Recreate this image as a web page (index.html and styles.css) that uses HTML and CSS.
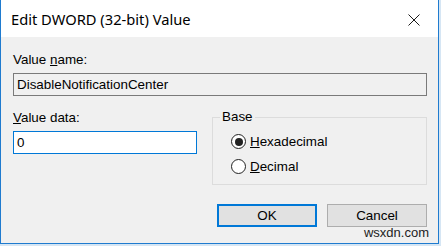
FILE: index.html
```html
<!DOCTYPE html>
<html lang="en">
<head>
    <meta charset="UTF-8">
    <title>Edit DWORD (32-bit) Value</title>
    <link rel="stylesheet" href="styles.css">
</head>
<body>
    <div class="window">
        <div class="titlebar">
            <span class="title">Edit DWORD (32-bit) Value</span>
            <svg class="close" width="12" height="12" viewBox="0 0 12 12">
                <path d="M0.5 0.5 L11.5 11.5 M11.5 0.5 L0.5 11.5" stroke="#1a1a1a" stroke-width="1" fill="none"/>
            </svg>
        </div>

        <div class="content">
            <div class="label">Value <u>n</u>ame:</div>
            <div class="textbox readonly">DisableNotificationCenter</div>

            <div class="lower">
                <div class="data-col">
                    <div class="label"><u>V</u>alue data:</div>
                    <div class="textbox focused">0</div>
                </div>
                <fieldset class="base">
                    <legend>Base</legend>
                    <div class="radio-row">
                        <span class="radio checked"></span>
                        <span><u>H</u>exadecimal</span>
                    </div>
                    <div class="radio-row">
                        <span class="radio"></span>
                        <span><u>D</u>ecimal</span>
                    </div>
                </fieldset>
            </div>

            <div class="buttons">
                <button class="btn default">OK</button>
                <button class="btn">Cancel</button>
            </div>
        </div>

        <div class="watermark">wsxdn.com</div>
    </div>
</body>
</html>
```

FILE: styles.css
```css
body {
    margin: 0;
    background-color: #d6e6f4;
    font-family: "Liberation Sans", Arial, sans-serif;
    font-size: 13.4px;
    color: #000;
}

.window {
    position: relative;
    width: 439px;
    height: 244px;
    box-sizing: border-box;
    background-color: #f0f0f0;
    border: 1px solid #1f7bcf;
    border-top: none;
}

.titlebar {
    height: 37px;
    background-color: #fff;
    display: flex;
    align-items: center;
    justify-content: space-between;
    padding: 0 18px 0 10px;
}

.title {
    font-family: "Noto Sans", sans-serif;
    font-size: 14.7px;
    color: #000;
    padding-top: 1px;
}

.close {
    margin-top: 2px;
}

.content {
    padding: 15px 11px 0 12px;
}

.label {
    height: 16px;
    line-height: 16px;
    margin-bottom: 5px;
}

.textbox {
    height: 23px;
    box-sizing: border-box;
    line-height: 21px;
    padding-left: 3px;
    border: 1px solid #7a7a7a;
    background-color: #fff;
}

.textbox.readonly {
    background-color: #f0f0f0;
}

.textbox.focused {
    border-color: #0078d7;
}

.lower {
    display: flex;
    align-items: flex-start;
    gap: 15px;
}

.data-col {
    width: 184px;
    padding-top: 14px;
}

.base {
    width: 215px;
    box-sizing: border-box;
    margin: 13px 0 0 0;
    padding: 4px 7px 5px 7px;
    border: 1px solid #dcdcdc;
    min-width: 0;
}

.base legend {
    padding: 0 2px;
    line-height: 16px;
}

.radio-row {
    height: 25px;
    display: flex;
    align-items: center;
}

.radio {
    width: 15px;
    height: 15px;
    box-sizing: border-box;
    border: 1px solid #222;
    border-radius: 50%;
    background-color: #fff;
    margin: 0 4px 0 11px;
    display: flex;
    align-items: center;
    justify-content: center;
}

.radio.checked::after {
    content: "";
    width: 8px;
    height: 8px;
    border-radius: 50%;
    background-color: #222;
}

.buttons {
    display: flex;
    justify-content: flex-end;
    gap: 10px;
    margin-top: 19px;
}

.btn {
    width: 100px;
    height: 23px;
    box-sizing: border-box;
    padding: 0;
    font-family: "Liberation Sans", Arial, sans-serif;
    font-size: 13.4px;
    color: #000;
    background-color: #e1e1e1;
    border: 1px solid #adadad;
}

.btn.default {
    border: 2px solid #0078d7;
}

.watermark {
    position: absolute;
    right: 9px;
    bottom: 3px;
    font-size: 13px;
    color: #222;
}
```
